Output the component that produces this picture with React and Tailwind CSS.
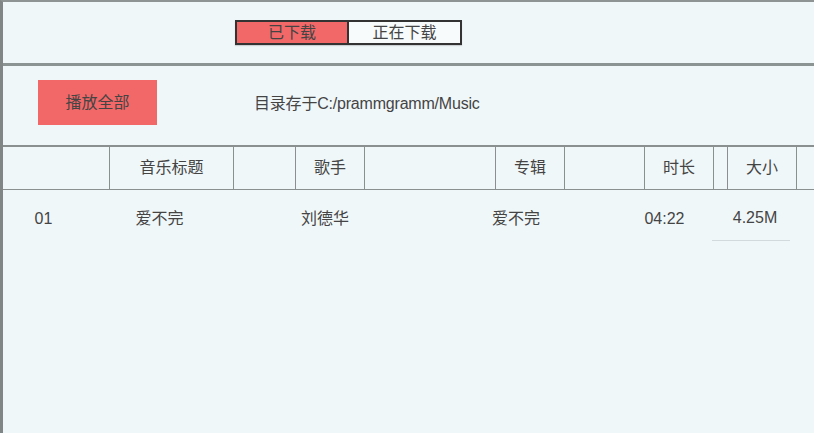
export default function App() {
  const font = { fontFamily: '"Liberation Sans", Arial, "Noto Sans CJK SC", sans-serif' }

  return (
    <div
      className="w-[814px] h-[433px] overflow-hidden bg-[#f0f7f9] border-l-[3px] border-t-2 border-l-[#808585] border-t-[#8e9494] text-[16px] text-[#444]"
      style={font}
    >
      {/* tabs */}
      <div className="h-[61px] flex items-start pt-[18px] pl-[232px]">
        <div className="flex shadow-[0_1px_1px_rgba(0,0,0,0.15)]">
          <div className="w-[114px] h-[25px] bg-[#f26868] border-2 border-[#333] flex items-center justify-center leading-none">
            已下载
          </div>
          <div className="w-[113px] h-[25px] bg-[#f7fbfc] border-2 border-l-0 border-[#333] flex items-center justify-center leading-none">
            正在下载
          </div>
        </div>
      </div>

      {/* play all + path */}
      <div className="h-[82px] border-t-[3px] border-[#8c9393] flex items-start pt-[14px]">
        <div className="ml-[35px] w-[119px] h-[45px] bg-[#f26868] flex items-center justify-center">
          播放全部
        </div>
        <div className="ml-[97px] h-[45px] flex items-center pt-[3px] tracking-[-0.2px]">目录存于C:/prammgramm/Music</div>
      </div>

      {/* header */}
      <div className="h-[45px] border-t-2 border-b border-[#8a9090] flex">
        <div className="w-[107px] border-r border-[#8a9090]" />
        <div className="w-[124px] border-r border-[#8a9090] flex items-center justify-center">音乐标题</div>
        <div className="w-[62px] border-r border-[#8a9090]" />
        <div className="w-[69px] border-r border-[#8a9090] flex items-center justify-center">歌手</div>
        <div className="w-[131px] border-r border-[#8a9090]" />
        <div className="w-[69px] border-r border-[#8a9090] flex items-center justify-center">专辑</div>
        <div className="w-[80px] border-r border-[#8a9090]" />
        <div className="w-[69px] border-r border-[#8a9090] flex items-center justify-center">时长</div>
        <div className="w-[14px] border-r border-[#8a9090]" />
        <div className="w-[69px] border-r border-[#8a9090] flex items-center justify-center">大小</div>
        <div className="flex-1" />
      </div>

      {/* row */}
      <div className="flex h-[52px]">
        <div className="w-[81px] flex items-center justify-center pt-[6px]">01</div>
        <div className="w-[151px] flex items-center justify-center pt-[6px]">爱不完</div>
        <div className="w-[180px] flex items-center justify-center pt-[6px]">刘德华</div>
        <div className="w-[202px] flex items-center justify-center pt-[6px]">爱不完</div>
        <div className="w-[95px] flex items-center justify-center pt-[6px]">04:22</div>
        <div className="w-[78px] h-[51px] border-b border-[#d3dadd] flex items-center justify-center pl-[8px] pt-[5px]">4.25M</div>
      </div>
    </div>
  )
}
